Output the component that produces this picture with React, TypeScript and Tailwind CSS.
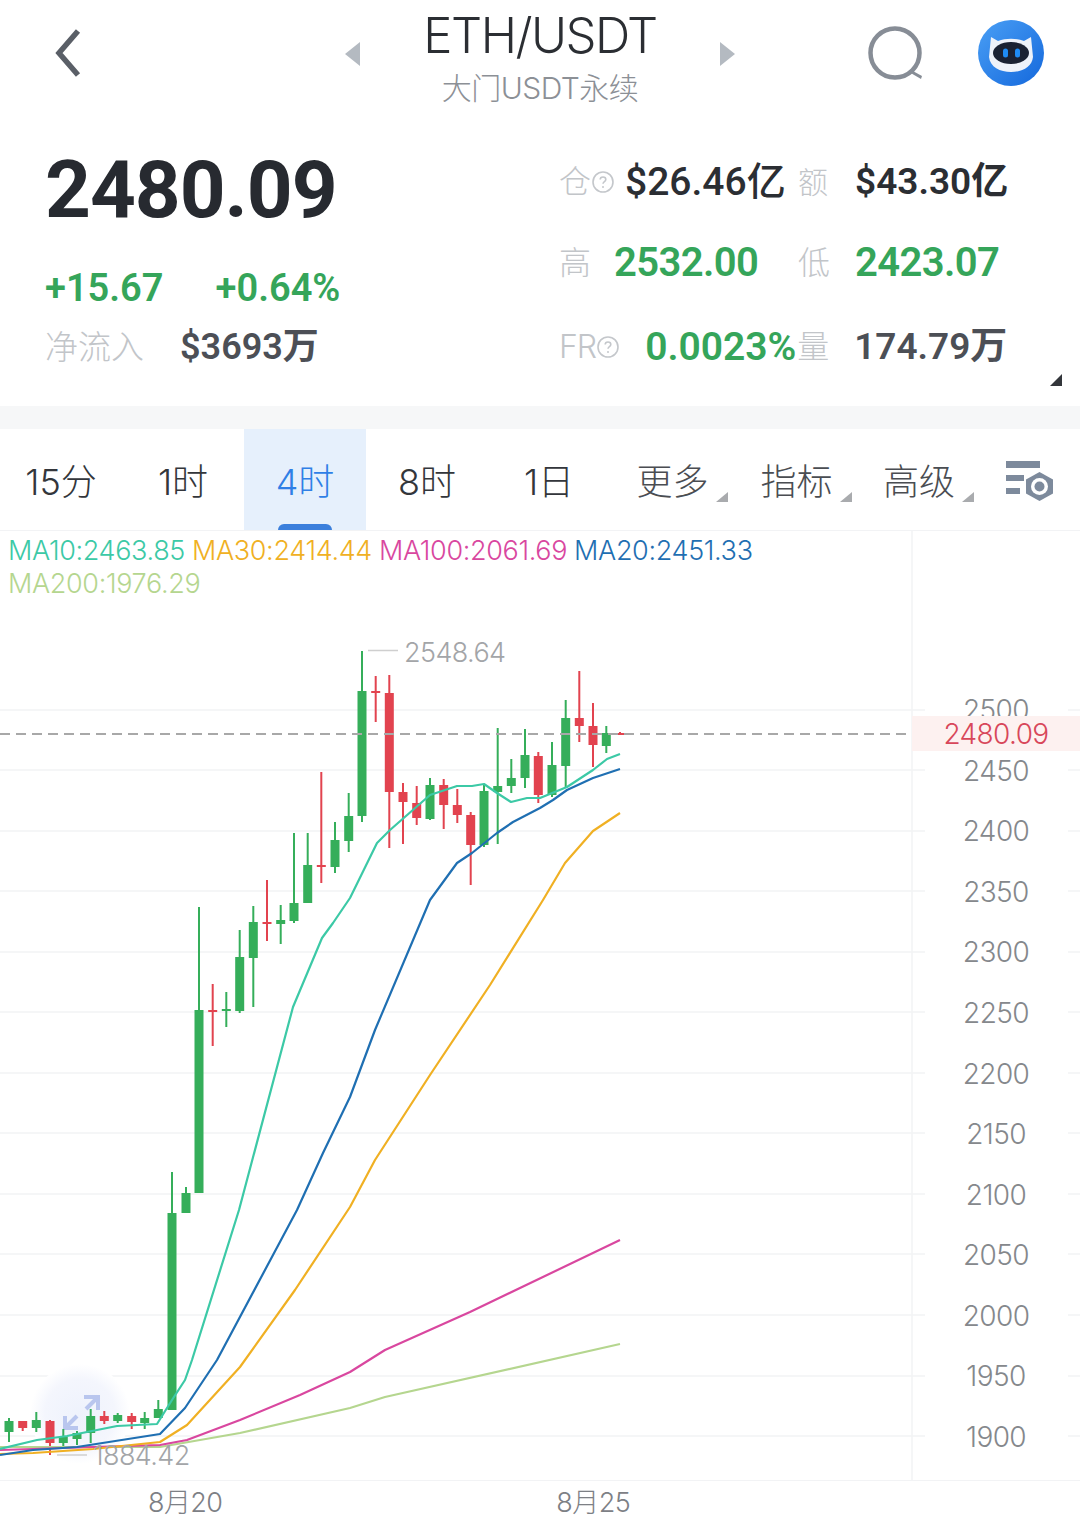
const FONT = "font-['Inter','Noto_Sans_CJK_SC',sans-serif]";
const NUM = "font-['Roboto','Noto_Sans_CJK_SC',sans-serif]";

const GREEN = "#35ae5a";
const RED = "#e2434f";

// x, wick top, wick bottom, body top, body bottom, up
const CANDLES: [number, number, number, number, number, boolean][] = [
  [9, 1418, 1442, 1421, 1432, true],
  [22.7, 1421, 1431, 1421, 1428, false],
  [36.3, 1412, 1432, 1420, 1428, true],
  [50, 1420, 1455, 1421, 1443, false],
  [63.3, 1429, 1447, 1437, 1443, true],
  [77, 1431, 1445, 1433, 1439, true],
  [90.7, 1409, 1443, 1416, 1433, true],
  [104.3, 1411, 1424, 1416, 1421, false],
  [117.7, 1413, 1423, 1415, 1421, true],
  [131.7, 1413, 1429, 1416, 1422, false],
  [144.7, 1412, 1429, 1418, 1423, true],
  [158.3, 1400, 1418, 1409, 1418, true],
  [172, 1172, 1410, 1213, 1410, true],
  [186, 1187, 1213, 1193, 1213, true],
  [199, 907, 1193, 1010, 1193, true],
  [212.7, 984, 1046, 1010, 1012, false],
  [226.3, 992, 1027, 1009, 1011, true],
  [239.7, 930, 1013, 957, 1011, true],
  [253.3, 906, 1007, 922, 958, true],
  [267, 880, 941, 922, 924, false],
  [280.7, 905, 944, 920, 924, true],
  [294, 833, 923, 903, 921, true],
  [307.7, 833, 903, 865, 903, true],
  [321.3, 772, 883, 865, 867, false],
  [335, 822, 873, 840, 867, true],
  [348.7, 793, 852, 816, 841, true],
  [362, 651, 822, 691, 816, true],
  [375.7, 676, 722, 691, 692.5, false],
  [389.3, 675, 848, 693, 792, false],
  [403, 783, 844, 792, 802, false],
  [416.7, 786, 825, 803, 818, false],
  [430, 778, 820, 785, 819, true],
  [443.7, 779, 829, 785, 805, false],
  [457.3, 789, 823, 805, 815, false],
  [470.7, 812, 885, 815, 845, false],
  [484, 785, 847, 791, 845, true],
  [497.7, 728, 844, 786, 792, true],
  [511.3, 759, 793, 778, 786, true],
  [525, 729, 788, 755, 778, true],
  [538.3, 752, 803, 756, 795, false],
  [552, 742, 797, 765, 795, true],
  [565.7, 700, 787, 718, 766, true],
  [579.3, 671, 742, 718, 726, false],
  [593, 703, 767, 726, 745, false],
  [606.3, 726, 753, 733, 746, true],
  [620, 732, 735, 733, 734.5, false],
];

const MA_LINES = [
  { color: "#b5d68f", points: "0,1447 93,1447 160,1447 240,1433 350,1408 385,1397 620,1344" },
  { color: "#d9479f", points: "0,1450 33,1449 93,1447 160,1445 187,1440 240,1420 300,1395 350,1372 385,1350 470,1312 620,1240" },
  { color: "#f0b023", points: "0,1454 33,1453 93,1449 160,1442 187,1425 240,1367 295,1290 350,1207 375,1160 430,1075 490,985 543,900 565,863 593,831 620,813" },
  { color: "#1f6fb2", points: "0,1455 33,1450 77,1447 160,1434 185,1408 217,1360 297,1210 323,1153 350,1097 375,1030 430,900 457,863 472,853 497,833 513,822 540,808 553,800 567,790 593,778 620,769" },
  { color: "#3cc9a6", points: "0,1449 37,1440 67,1436 97,1430 117,1426 157,1424 172,1400 185,1380 192,1360 239,1210 293,1007 322,938 333,923 350,898 377,843 390,830 430,795 457,786 472,786 484,784 497,793 511,802 527,798 540,798 567,787 593,770 607,759 620,754" },
];

const GRID_Y = [710, 770, 831, 891, 952, 1012, 1073, 1133, 1194, 1254, 1315, 1376, 1436];
const AXIS = ["2500", "2450", "2400", "2350", "2300", "2250", "2200", "2150", "2100", "2050", "2000", "1950", "1900"];

function Help() {
  return (
    <svg width="24" height="24" viewBox="0 0 24 24" className="shrink-0">
      <circle cx="12" cy="12" r="10" fill="none" stroke="#c4c7cb" strokeWidth="1.6" />
      <path d="M9.2 9.6c0-1.6 1.2-2.6 2.8-2.6s2.8 1 2.8 2.4c0 2.2-2.8 2.2-2.8 4.4" fill="none" stroke="#c4c7cb" strokeWidth="1.6" />
      <circle cx="12" cy="17" r="1" fill="#c4c7cb" />
    </svg>
  );
}

function Tab({ label, active, more }: { label: string; active?: boolean; more?: boolean }) {
  return (
    <div className={active ? "relative flex items-center justify-center bg-[#e6f0fc] text-[#2f7fe6]" : "relative flex items-center justify-center text-[#33363b]"}>
      <span className={more ? "relative pt-[5px] text-[#4a4d52]" : "pt-[5px]"}>
        {label}
        {more && (
          <svg width="12" height="10" viewBox="0 0 12 10" className="absolute -right-[19px] bottom-[7px]">
            <path d="M12 0V10H0Z" fill="#a9abae" />
          </svg>
        )}
      </span>
      {active && <div className="absolute bottom-0 left-[34px] h-[6px] w-[54px] rounded-t-[6px] bg-[#3b7fdc]" />}
    </div>
  );
}

function Chart() {
  return (
    <svg viewBox="0 531 1080 949" className="absolute inset-0 h-full w-full">
      <defs>
        <radialGradient id="halo">
          <stop offset="0" stopColor="#eef2fc" />
          <stop offset="0.7" stopColor="#f4f6fd" />
          <stop offset="1" stopColor="#ffffff" />
        </radialGradient>
      </defs>
      {GRID_Y.map((y) => (
        <g key={y} stroke="#f2f3f5" strokeWidth="1.5">
          <line x1="0" x2="925" y1={y} y2={y} />
          <line x1="1068" x2="1080" y1={y} y2={y} />
        </g>
      ))}
      <line x1="912" x2="912" y1="531" y2="1480" stroke="#f2f3f5" strokeWidth="1.5" />
      <circle cx="80" cy="1414" r="50" fill="url(#halo)" />
      <g fill="none" stroke="#b9c6ee" strokeWidth="4">
        <path d="M65 1416 V1428 H78" />
        <path d="M65 1428 L77 1416" />
        <path d="M84 1397 H98 V1410" />
        <path d="M98 1397 L86 1409" />
      </g>
      {CANDLES.map(([x, wt, wb, bt, bb, up]) => {
        const c = up ? GREEN : RED;
        return (
          <g key={x} fill={c}>
            <rect x={x - 1} y={wt} width="2" height={wb - wt} />
            <rect x={x - 4.5} y={bt} width="9" height={Math.max(bb - bt, 2)} />
          </g>
        );
      })}
      {MA_LINES.map((l) => (
        <polyline key={l.color} points={l.points} fill="none" stroke={l.color} strokeWidth="2.2" strokeLinejoin="round" />
      ))}
      <line x1="0" x2="910" y1="734" y2="734" stroke="#a8a8a8" strokeWidth="2" strokeDasharray="10 6" />
      <line x1="368" x2="398" y1="650.5" y2="650.5" stroke="#cfcfcf" strokeWidth="1.5" />
      <line x1="57" x2="87" y1="1455" y2="1455" stroke="#cfcfcf" strokeWidth="1.5" />
    </svg>
  );
}

export default function App() {
  return (
    <div className={`${FONT} h-[1516px] w-[1080px] overflow-hidden bg-white`}>
      <header className="flex h-[106px] items-center">
        <svg width="26" height="48" viewBox="0 0 26 48" className="ml-[55px] shrink-0">
          <path d="M23 2 L4 24 L23 46" fill="none" stroke="#5a5f67" strokeWidth="5.5" />
        </svg>
        <svg width="15" height="24" viewBox="0 0 15 24" className="ml-[264px] shrink-0 translate-y-[1px]">
          <path d="M15 0V24L0 12Z" fill="#b4bac1" />
        </svg>
        <div className="w-[360px] shrink-0 pt-[6px] text-center">
          <div className="text-[49px] leading-[60px] font-light tracking-[-1.5px] text-[#2b2e33]">ETH/USDT</div>
          <div className="mt-[4px] text-[30px] leading-[36px] font-light tracking-[-0.5px] text-[#8c9096]">大门USDT永续</div>
        </div>
        <svg width="15" height="24" viewBox="0 0 15 24" className="shrink-0 translate-y-[1px]">
          <path d="M0 0V24L15 12Z" fill="#b4bac1" />
        </svg>
        <svg width="58" height="56" viewBox="0 0 58 56" className="ml-[133px] shrink-0 translate-y-[1px]">
          <circle cx="27" cy="27" r="24.5" fill="none" stroke="#878d96" strokeWidth="4.5" />
          <path d="M43 44 L54 50 L53 53 L41 46Z" fill="#878d96" />
        </svg>
        <svg width="66" height="66" viewBox="0 0 66 66" className="ml-[52px] shrink-0">
          <defs>
            <linearGradient id="av" x1="0" y1="0" x2="1" y2="1">
              <stop offset="0" stopColor="#4a9ff5" />
              <stop offset="1" stopColor="#1468dc" />
            </linearGradient>
          </defs>
          <circle cx="33" cy="33" r="33" fill="url(#av)" />
          <path d="M13 17 L20 21 C28 18 38 18 46 21 L53 17 L55 37 C54 47 44 52 33 52 C22 52 12 47 11 37Z" fill="#eef2f9" />
          <ellipse cx="33" cy="33" rx="18" ry="11" fill="#1b2233" />
          <rect x="25" y="28.5" width="5" height="9" rx="2.5" fill="#1f8cf5" />
          <rect x="37" y="28.5" width="5" height="9" rx="2.5" fill="#1f8cf5" />
        </svg>
      </header>

      <section className="relative flex h-[300px]">
        <div className="w-[559px] shrink-0 pl-[45px]">
          <div className={`${NUM} mt-[40px] text-[80px] leading-[88px] font-bold tracking-[-1px] text-[#272a30]`}>2480.09</div>
          <div className={`${NUM} mt-[30px] flex gap-[52px] text-[38px] leading-[48px] font-semibold text-[#35a55a]`}>
            <span>+15.67</span>
            <span>+0.64%</span>
          </div>
          <div className="mt-[11px] flex items-center gap-[36px]">
            <span className="text-[33px] leading-[48px] font-light text-[#c2c5c9]">净流入</span>
            <span className={`${NUM} text-[36px] leading-[48px] font-semibold text-[#4c4f56]`}>$3693万</span>
          </div>
        </div>
        <div className="flex-1 pt-[52px]">
          <div className="flex h-[48px] items-center">
            <span className="text-[32px] font-light text-[#c2c5c9]">仓</span>
            <Help />
            <span className={`${NUM} ml-[10px] w-[173px] text-[39px] font-medium text-[#2b2e33]`}>$26.46亿</span>
            <span className="w-[57px] text-[30px] font-light text-[#c2c5c9]">额</span>
            <span className={`${NUM} text-[37px] font-semibold text-[#2b2e33]`}>$43.30亿</span>
          </div>
          <div className="mt-[33px] flex h-[48px] items-center">
            <span className="w-[55px] text-[32px] font-light text-[#c2c5c9]">高</span>
            <span className={`${NUM} w-[184px] text-[40px] font-semibold tracking-[-0.6px] text-[#35a55a]`}>2532.00</span>
            <span className="w-[57px] text-[32px] font-light text-[#c2c5c9]">低</span>
            <span className={`${NUM} text-[40px] font-semibold tracking-[-0.6px] text-[#35a55a]`}>2423.07</span>
          </div>
          <div className="mt-[36px] flex h-[48px] items-center">
            <span className="text-[32px] font-light tracking-[-1px] text-[#c2c5c9]">FR</span>
            <Help />
            <span className={`${NUM} ml-[25px] w-[152px] text-[39px] font-semibold text-[#35a55a]`}>0.0023%</span>
            <span className="w-[57px] text-[32px] font-light text-[#c2c5c9]">量</span>
            <span className={`${NUM} text-[37px] font-semibold text-[#4c4f56]`}>174.79万</span>
          </div>
        </div>
        <svg width="12" height="12" viewBox="0 0 12 12" className="absolute right-[18px] bottom-[20px]">
          <path d="M12 0V12H0Z" fill="#33363b" />
        </svg>
      </section>

      <div className="h-[23px] bg-[#f6f7f8]" />

      <nav className="grid h-[102px] grid-cols-[122px_122px_122px_122px_122px_125px_123px_122px_1fr] border-b border-[#f2f3f5] text-[36px] font-light">
        <Tab label="15分" />
        <Tab label="1时" />
        <Tab label="4时" active />
        <Tab label="8时" />
        <Tab label="1日" />
        <Tab label="更多" more />
        <Tab label="指标" more />
        <Tab label="高级" more />
        <div className="flex items-center">
          <svg width="50" height="42" viewBox="0 0 50 42" className="ml-[25px] shrink-0 translate-y-[1px]">
            <rect x="1" y="1" width="34" height="7" fill="#7d8a9c" />
            <rect x="1" y="15" width="18" height="6" fill="#7d8a9c" />
            <rect x="1" y="28" width="14" height="6" fill="#7d8a9c" />
            <path d="M34.5 12 L48 19.5 V33.5 L34.5 41 L21 33.5 V19.5Z" fill="#7d8a9c" />
            <circle cx="34.5" cy="26.5" r="8.5" fill="#fff" />
            <circle cx="34.5" cy="26.5" r="5" fill="#7d8a9c" />
          </svg>
        </div>
      </nav>

      <div className="relative flex h-[950px] border-b border-[#f2f3f5]">
        <Chart />
        <div className="relative w-[912px] shrink-0 pt-[3px] pl-[8px] text-[27px] leading-[33px] font-light tracking-[-0.35px]">
          <div className="flex gap-[7px]">
            <span className="text-[#3cc9a6]">MA10:2463.85</span>
            <span className="text-[#f0b023]">MA30:2414.44</span>
            <span className="text-[#d9479f]">MA100:2061.69</span>
            <span className="text-[#1f6fb2]">MA20:2451.33</span>
          </div>
          <div className="text-[#b5d68f]">MA200:1976.29</div>
          <span className="absolute top-[105px] left-[404px] tracking-[-0.6px] text-[#a3a5a8]">2548.64</span>
          <span className="absolute top-[908px] left-[93px] tracking-[-0.6px] text-[#a3a5a8]">1884.42</span>
        </div>
        <div className="relative flex-1 pt-[149px] text-[28px] font-light tracking-[-0.6px] text-[#85888c]">
          {AXIS.map((v) => (
            <div key={v} className="flex h-[60.55px] items-center justify-center">
              {v}
            </div>
          ))}
          <div className="absolute top-[185px] left-0 flex h-[35px] w-full items-center justify-center bg-[#fdf1f0] text-[#d8475a]">
            2480.09
          </div>
        </div>
      </div>

      <div className="flex h-[35px] items-center gap-[334px] pt-[8px] pl-[148px] text-[27px] leading-[27px] font-light tracking-[-0.6px] text-[#7d8085]">
        <span>8月20</span>
        <span>8月25</span>
      </div>
    </div>
  );
}
